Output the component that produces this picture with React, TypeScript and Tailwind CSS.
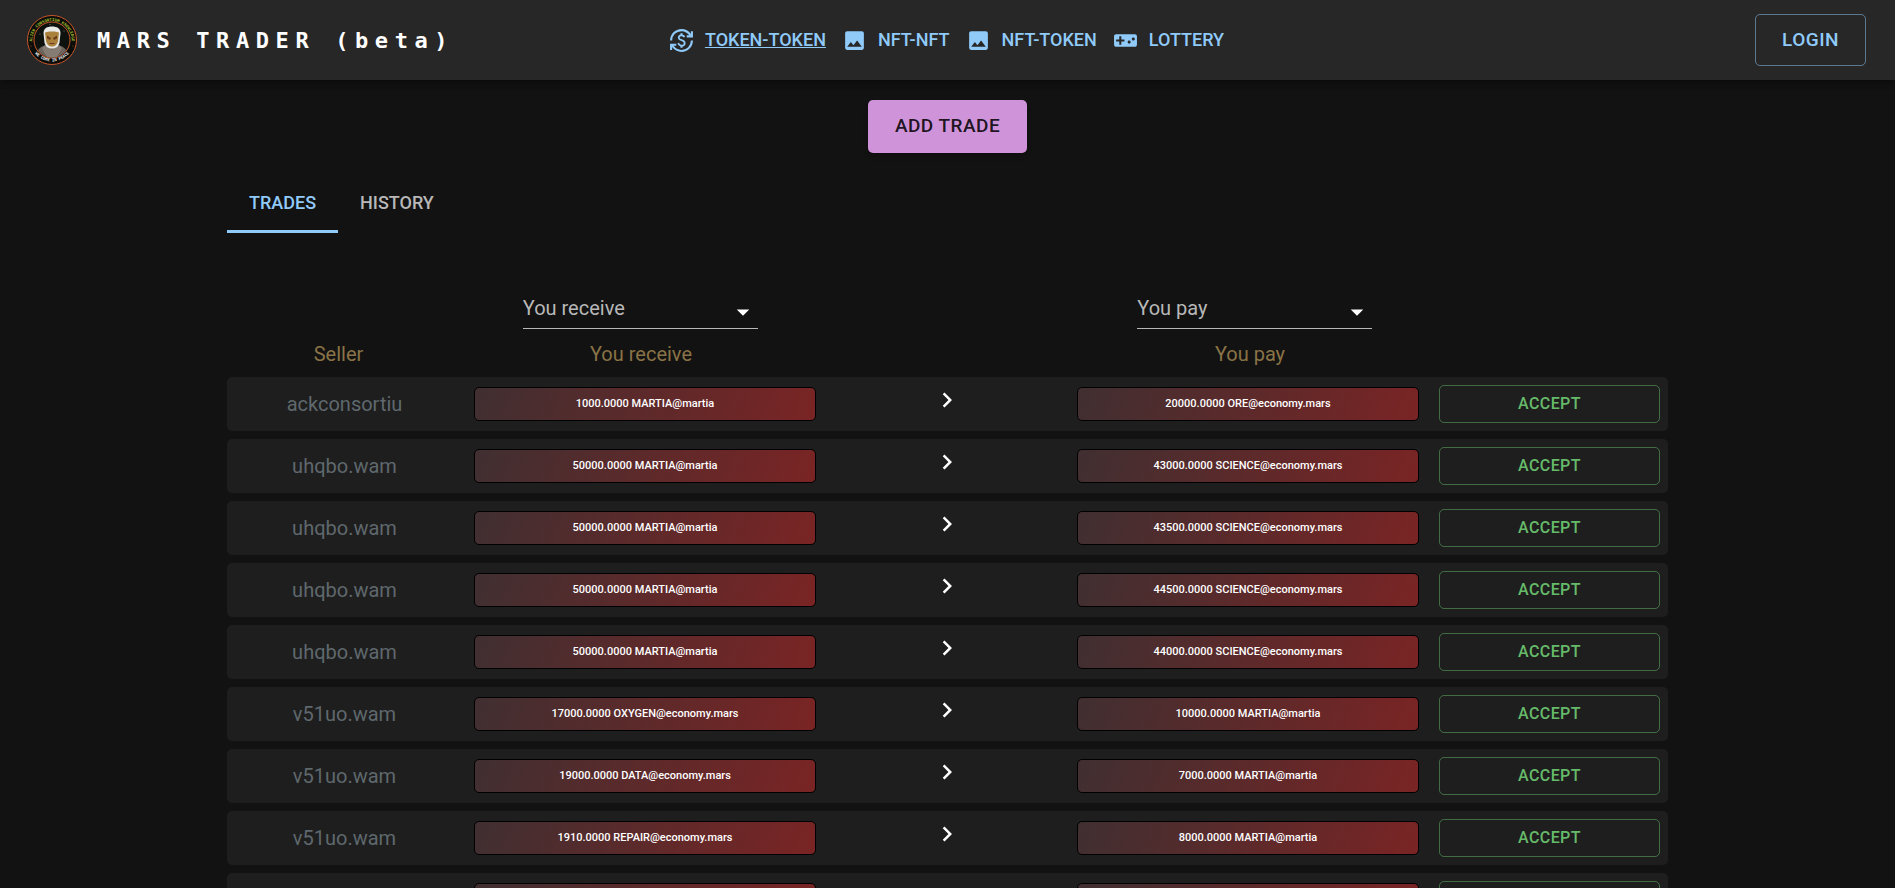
import { useState } from "react";
import {
  MdArrowDropDown,
  MdChevronRight,
  MdCurrencyExchange,
  MdImage,
  MdVideogameAsset,
} from "react-icons/md";

type Trade = {
  id: number;
  seller: string;
  receive: string;
  pay: string;
};

const NAV_LINKS = [
  { label: "TOKEN-TOKEN", href: "#token-token", icon: MdCurrencyExchange },
  { label: "NFT-NFT", href: "#nft-nft", icon: MdImage },
  { label: "NFT-TOKEN", href: "#nft-token", icon: MdImage },
  { label: "LOTTERY", href: "#lottery", icon: MdVideogameAsset },
];

const TABS = ["TRADES", "HISTORY"];

const TRADES: Trade[] = [
  { id: 1, seller: "ackconsortiu", receive: "1000.0000 MARTIA@martia", pay: "20000.0000 ORE@economy.mars" },
  { id: 2, seller: "uhqbo.wam", receive: "50000.0000 MARTIA@martia", pay: "43000.0000 SCIENCE@economy.mars" },
  { id: 3, seller: "uhqbo.wam", receive: "50000.0000 MARTIA@martia", pay: "43500.0000 SCIENCE@economy.mars" },
  { id: 4, seller: "uhqbo.wam", receive: "50000.0000 MARTIA@martia", pay: "44500.0000 SCIENCE@economy.mars" },
  { id: 5, seller: "uhqbo.wam", receive: "50000.0000 MARTIA@martia", pay: "44000.0000 SCIENCE@economy.mars" },
  { id: 6, seller: "v51uo.wam", receive: "17000.0000 OXYGEN@economy.mars", pay: "10000.0000 MARTIA@martia" },
  { id: 7, seller: "v51uo.wam", receive: "19000.0000 DATA@economy.mars", pay: "7000.0000 MARTIA@martia" },
  { id: 8, seller: "v51uo.wam", receive: "1910.0000 REPAIR@economy.mars", pay: "8000.0000 MARTIA@martia" },
  { id: 9, seller: "v51uo.wam", receive: "2000.0000 REPAIR@economy.mars", pay: "9000.0000 MARTIA@martia" },
];

function Logo() {
  return (
    <svg viewBox="0 0 100 100" className="size-[50px] shrink-0" aria-hidden="true">
      <defs>
        <path id="logo-top" d="M 11 58 A 39.5 39.5 0 1 1 89 58" />
        <path id="logo-bottom" d="M 6 55 A 44.5 44.5 0 0 0 94 55" />
        <clipPath id="logo-inner">
          <circle cx="50" cy="50" r="35" />
        </clipPath>
      </defs>
      <circle cx="50" cy="50" r="49" fill="#0b0d0a" stroke="#c9582a" strokeWidth="2" />
      <circle cx="50" cy="50" r="36" fill="#0d120f" stroke="#c9582a" strokeWidth="2" />
      <g clipPath="url(#logo-inner)">
        <circle cx="26" cy="38" r="1" fill="#8a8f8a" />
        <circle cx="74" cy="32" r="1" fill="#8a8f8a" />
        <circle cx="46" cy="19" r="1" fill="#8a8f8a" />
        <path d="M16 88 C18 68 28 63 36 61 L64 61 C74 64 82 69 84 88 Z" fill="#6d655d" />
        <path d="M36 60 L50 70 L64 60 L70 66 L58 88 L42 88 L30 66 Z" fill="#857c73" />
        <path
          d="M33 36 C33 27 40 23 50 23 C60 23 67 27 67 36 L65 55 C63 64 57 67 50 67 C43 67 37 64 35 55 Z"
          fill="#e9e9e7"
        />
        <path
          d="M36 35 C42 32 58 32 64 35 L62 52 C60 60 56 63 50 63 C44 63 40 60 38 52 Z"
          fill="#a9803c"
        />
        <path d="M40 41 L48 46 L46 50 L40 47 Z M60 41 L52 46 L54 50 L60 47 Z" fill="#6b3d1c" />
        <path d="M45 57 L55 57" stroke="#6b3d1c" strokeWidth="2" />
      </g>
      <text fill="#a5bf2b" fontSize="8" fontWeight="700" fontFamily="DejaVu Sans Mono, monospace">
        <textPath href="#logo-top" startOffset="50%" textAnchor="middle">
          ALIEN CONSORTIUM KNOWLEDGE
        </textPath>
      </text>
      <text fill="#f0f0f0" fontSize="8" fontWeight="700" fontFamily="DejaVu Sans Mono, monospace">
        <textPath href="#logo-bottom" startOffset="50%" textAnchor="middle">
          WE COME IN PEACE
        </textPath>
      </text>
      <circle cx="8" cy="62" r="1" fill="#c9582a" />
      <circle cx="92" cy="62" r="1" fill="#c9582a" />
    </svg>
  );
}

function TokenFilter({ label, options }: { label: string; options: string[] }) {
  return (
    <div className="relative w-[235px]">
      <select
        aria-label={label}
        defaultValue=""
        className="h-10 w-full appearance-none border-b border-[#b8b8b8] bg-transparent pr-8 pb-0.5 text-xl text-[#b8b8b8] focus:outline-none"
      >
        <option value="">{label}</option>
        {options.map((option) => (
          <option key={option} value={option}>
            {option}
          </option>
        ))}
      </select>
      <MdArrowDropDown className="pointer-events-none absolute right-0 top-2 size-[30px] text-white" />
    </div>
  );
}

function Amount({ value }: { value: string }) {
  return (
    <div className="h-[34px] truncate rounded-[5px] border border-black bg-linear-[110deg,#402f31,#7a2424] text-center text-[11px] leading-8 font-medium text-white">
      {value}
    </div>
  );
}

export default function App() {
  const [tab, setTab] = useState("TRADES");

  return (
    <div className="min-h-screen bg-[#121212] font-[Roboto,sans-serif] text-white">
      <header className="relative grid h-20 grid-cols-[1fr_auto_1fr] items-center bg-[#272727] pr-[29px] pl-[27px] shadow-[0_2px_4px_-1px_rgba(0,0,0,0.2),0_4px_5px_0_rgba(0,0,0,0.14),0_1px_10px_0_rgba(0,0,0,0.12)]">
        <a href="#home" className="flex items-center gap-5">
          <Logo />
          <span className="font-[DejaVu_Sans_Mono,monospace] text-[22px] font-bold tracking-[0.3em] whitespace-nowrap">
            MARS TRADER (beta)
          </span>
        </a>

        <nav className="flex items-center gap-4 text-lg font-medium text-[#90caf9]">
          {NAV_LINKS.map(({ label, href, icon: Icon }, index) => (
            <a key={label} href={href} className="flex items-center gap-[11px]">
              <Icon className="size-[25px]" />
              <span className={index === 0 ? "underline" : ""}>{label}</span>
            </a>
          ))}
        </nav>

        <button
          type="button"
          className="h-[52px] justify-self-end rounded-[5px] border border-[#90caf9]/50 px-[26px] text-[19px] font-medium tracking-wide text-[#90caf9]"
        >
          LOGIN
        </button>
      </header>

      <main className="mx-auto w-full max-w-[1441px] pt-5">
        <div className="flex justify-center">
          <button
            type="button"
            className="h-[53px] rounded-[5px] bg-[#ce93d8] px-[27px] text-[19px] font-medium tracking-wide text-black/87 shadow-md"
          >
            ADD TRADE
          </button>
        </div>

        <div role="tablist" className="mt-5 flex">
          {TABS.map((name) => (
            <button
              key={name}
              type="button"
              role="tab"
              aria-selected={tab === name}
              onClick={() => setTab(name)}
              className={`h-[60px] border-b-3 px-[22px] pt-0.5 text-lg font-medium ${
                tab === name
                  ? "border-[#90caf9] text-[#90caf9]"
                  : "border-transparent text-[#b8b8b8]"
              }`}
            >
              {name}
            </button>
          ))}
        </div>

        {/* Filters */}
        <div className="mt-14 grid grid-cols-2 justify-items-center px-[106px]">
          <TokenFilter label="You receive" options={["MARTIA", "OXYGEN", "DATA", "REPAIR"]} />
          <TokenFilter label="You pay" options={["ORE", "SCIENCE", "MARTIA"]} />
        </div>

        <table className="w-full table-fixed border-separate border-spacing-x-0 border-spacing-y-2">
          <colgroup>
            <col className="w-[235px]" />
            <col />
            <col className="w-[237px]" />
            <col />
            <col className="w-[237px]" />
          </colgroup>
          <thead>
            <tr className="h-8 text-xl text-[#8a7346]">
              <th className="pt-0.5 pr-3 font-normal">Seller</th>
              <th className="pt-0.5 pr-2 font-normal">You receive</th>
              <td />
              <th className="pt-0.5 pl-1 font-normal">You pay</th>
              <td />
            </tr>
          </thead>
          <tbody>
            {TRADES.map((trade) => (
              <tr key={trade.id} className="h-[54px] bg-[#1e1e1e] text-center">
                <td className="rounded-l-[5px] text-xl text-[#5f686d]">{trade.seller}</td>
                <td className="px-3">
                  <Amount value={trade.receive} />
                </td>
                <td className="pb-2">
                  <MdChevronRight className="mx-auto size-[30px]" />
                </td>
                <td className="px-3">
                  <Amount value={trade.pay} />
                </td>
                <td className="rounded-r-[5px] px-2">
                  <button
                    type="button"
                    className="h-[38px] w-full rounded-[5px] border border-[#66bb6a]/50 text-base font-medium tracking-wide text-[#66bb6a]"
                  >
                    ACCEPT
                  </button>
                </td>
              </tr>
            ))}
          </tbody>
        </table>
      </main>
    </div>
  );
}
